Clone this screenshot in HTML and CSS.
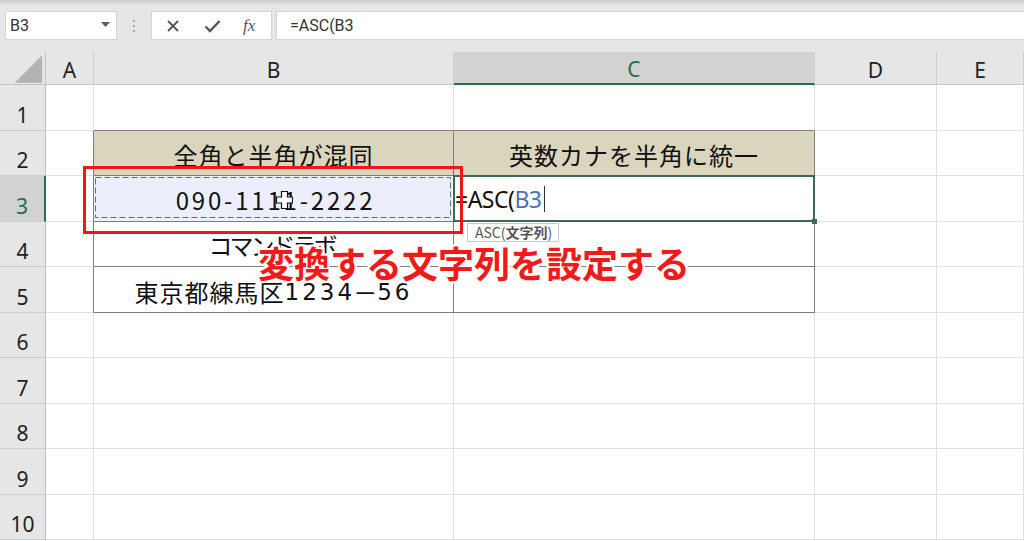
FILE: index.html
```html
<!DOCTYPE html>
<html lang="ja">
<head>
    <meta charset="UTF-8">
    <title>ASC</title>
    <link rel="stylesheet" href="styles.css">
</head>
<body>
<!-- 数式バー -->
<div class="top">
    <div class="namebox">
        <span>B3</span>
        <svg class="caret" width="9" height="5" viewBox="0 0 9 5"><polygon points="0,0 9,0 4.5,5" fill="#5a5a5a"/></svg>
    </div>
    <div class="grip"><i></i><i></i><i></i></div>
    <div class="fxbox">
        <svg width="14" height="14" viewBox="0 0 14 14"><path d="M2 2 L12 12 M12 2 L2 12" stroke="#555" stroke-width="1.8" fill="none"/></svg>
        <svg width="17" height="14" viewBox="0 0 17 14"><path d="M1.5 7.5 L6 12 L15.5 2" stroke="#555" stroke-width="2.4" fill="none"/></svg>
        <span class="fx">fx</span>
    </div>
    <div class="formula">=ASC(B3</div>
</div>

<!-- シート -->
<div class="sheet">
    <div class="hd corner"><svg width="46" height="33" viewBox="0 0 46 33"><polygon points="15,31 43,31 43,3" fill="#b3b3b3"/></svg></div>
    <div class="hd">A</div>
    <div class="hd">B</div>
    <div class="hd sel">C</div>
    <div class="hd">D</div>
    <div class="hd">E</div>

    <div class="rh">1</div><div class="c"></div><div class="c above"></div><div class="c above"></div><div class="c"></div><div class="c"></div>

    <div class="rh">2</div><div class="c beside"></div><div class="c t head">全角と半角が混同</div><div class="c t head">英数カナを半角に統一</div><div class="c"></div><div class="c"></div>

    <div class="rh sel">3</div><div class="c beside"></div>
    <div class="c t copy">
        <span class="tel">090-1111-2222</span>
        <svg class="ants" width="360" height="46"><rect x="2.5" y="2.5" width="355" height="40" fill="none" stroke="#4f7d66" stroke-width="1" stroke-dasharray="6 3"/></svg>
        <svg class="plus" width="17" height="18" viewBox="0 0 17 18"><path d="M5.5 0.5 H11.5 V6 H16.5 V12 H11.5 V17.5 H5.5 V12 H0.5 V6 H5.5 Z" fill="#fff" stroke="#111" stroke-width="1.2"/></svg>
    </div>
    <div class="c t edit"><span>=ASC(</span><span class="ref">B3</span><span class="caret-line"></span></div>
    <div class="c"></div><div class="c"></div>

    <div class="rh">4</div><div class="c beside"></div><div class="c t"><span class="kana">コマンドラボ</span></div><div class="c t"></div><div class="c"></div><div class="c"></div>

    <div class="rh">5</div><div class="c beside"></div><div class="c t low"><span class="addr">東京都練馬区</span><span class="num">1234</span><span class="dash">－</span><span class="num">56</span></div><div class="c t"></div><div class="c"></div><div class="c"></div>

    <div class="rh">6</div><div class="c"></div><div class="c"></div><div class="c"></div><div class="c"></div><div class="c"></div>
    <div class="rh">7</div><div class="c"></div><div class="c"></div><div class="c"></div><div class="c"></div><div class="c"></div>
    <div class="rh">8</div><div class="c"></div><div class="c"></div><div class="c"></div><div class="c"></div><div class="c"></div>
    <div class="rh">9</div><div class="c"></div><div class="c"></div><div class="c"></div><div class="c"></div><div class="c"></div>
    <div class="rh">10</div><div class="c"></div><div class="c"></div><div class="c"></div><div class="c"></div><div class="c"></div>
</div>

<!-- 注釈 -->
<div class="redbox"></div>
<div class="tip">ASC(<b>文字列</b>)</div>
<div class="caption">変換する文字列を設定する</div>
</body>
</html>
```

FILE: styles.css
```css
*{
    margin: 0;
    padding: 0;
    box-sizing: border-box;
}
body{
    width: 1024px;
    height: 541px;
    overflow: hidden;
    background: #fff;
    font-family: "Noto Sans CJK JP", sans-serif;
    color: #111;
    position: relative;
}

/*数式バー*/
.top{
    height: 52px;
    background: linear-gradient(#cbcbcb, #e6e6e6 5px);
    display: flex;
    align-items: flex-start;
    padding: 11px 0 0 5px;
}
.namebox{
    width: 112px;
    height: 29px;
    background: #fff;
    border: 1px solid #d4d4d4;
    display: flex;
    align-items: center;
    justify-content: space-between;
    padding: 0 6px 0 4px;
    font-family: Roboto, sans-serif;
    font-size: 16px;
    color: #333;
}
.namebox .caret{
    margin-bottom: 3px;
}
.grip{
    width: 34px;
    height: 29px;
    display: flex;
    flex-direction: column;
    align-items: center;
    justify-content: center;
    gap: 3px;
}
.grip i{
    width: 2px;
    height: 2px;
    background: #a8a8a8;
}
.fxbox{
    width: 121px;
    height: 29px;
    background: #fff;
    border: 1px solid #d4d4d4;
    display: flex;
    align-items: center;
    padding-left: 14px;
    gap: 24px;
}
.fxbox .fx{
    font-family: "Liberation Serif", serif;
    font-style: italic;
    font-size: 17px;
    color: #555;
    margin-left: -2px;
}
.formula{
    flex: 1;
    height: 29px;
    margin-left: 4px;
    background: #fff;
    border: 1px solid #d4d4d4;
    border-right: none;
    font-family: Roboto, sans-serif;
    font-size: 16px;
    color: #333;
    padding-left: 13px;
    line-height: 27px;
}

/*シート*/
.sheet{
    display: grid;
    grid-template-columns: 46px 48px 360px 361px 122px 1fr;
    grid-template-rows: 33px 46px 45px 46px 45px 46px 45px 46px 45px 46px 45px;
}
.hd{
    background: #e6e6e6;
    border-right: 1px solid #cfcfcf;
    border-bottom: 1px solid #c4c4c4;
    font-family: "Noto Sans", sans-serif;
    font-size: 21px;
    line-height: 21px;
    color: #222;
    display: flex;
    align-items: center;
    justify-content: center;
    padding-top: 4px;
}
.hd.corner{
    padding: 0;
    border-right-color: #c4c4c4;
}
.hd.sel{
    background: #d2d2d2;
    color: #217346;
    border-bottom: 2px solid #217346;
}
.rh{
    background: #e6e6e6;
    border-right: 1px solid #bfbfbf;
    border-bottom: 1px solid #cdcdcd;
    font-family: "Noto Sans", sans-serif;
    font-size: 21px;
    line-height: 21px;
    color: #222;
    display: flex;
    align-items: flex-end;
    justify-content: center;
    padding-bottom: 4px;
}
.rh.sel{
    background: #d2d2d2;
    color: #217346;
    border-right: 2px solid #217346;
}
.c{
    border-right: 1px solid #e0e0e0;
    border-bottom: 1px solid #e0e0e0;
    display: flex;
    align-items: center;
    justify-content: center;
    font-size: 24px;
    white-space: nowrap;
}
.c.above{
    border-bottom-color: #7d7d7d;
}
.c.beside{
    border-right-color: #7d7d7d;
}
/*表の罫線*/
.c.t{
    border-right-color: #7d7d7d;
    border-bottom-color: #7d7d7d;
}
.c.head{
    background: #dad5bd;
    letter-spacing: 1px;
    padding-top: 2px;
}
.c.low{
    padding-top: 4px;
}
.c.copy{
    background: #eceefb;
    position: relative;
}
.copy .tel{
    letter-spacing: 2.8px;
    margin: 2px 0 0 4px;
}
.copy .ants{
    position: absolute;
    left: -1px;
    top: -1px;
}
.copy .plus{
    position: absolute;
    left: 182px;
    top: 15px;
}
.c .kana{
    letter-spacing: -3px;
    margin-left: -4px;
}
.c .addr{
    letter-spacing: 1px;
}
.c .num{
    font-family: "DejaVu Sans", sans-serif;
    font-size: 23px;
    letter-spacing: 3px;
}
.c .dash{
    margin-left: -2px;
}
.c.edit{
    justify-content: flex-start;
    position: relative;
    padding-left: 1px;
    letter-spacing: -0.5px;
    font-family: "Noto Sans", sans-serif;
    font-size: 23px;
}
.c.edit::after{
    content: "";
    position: absolute;
    left: -1px;
    top: -1px;
    right: -1px;
    bottom: -1px;
    border: 2px solid #3d6a54;
}
.c.edit::before{
    content: "";
    position: absolute;
    right: -3px;
    bottom: -3px;
    width: 5px;
    height: 5px;
    background: #3d6a54;
    z-index: 1;
}
.edit .ref{
    color: #4a72b8;
}
.edit .caret-line{
    width: 1px;
    height: 26px;
    background: #333;
    margin-left: 2px;
}

/*注釈*/
.redbox{
    position: absolute;
    left: 83px;
    top: 166px;
    width: 380px;
    height: 68px;
    border: 3px solid #f01616;
}
.caption{
    position: absolute;
    left: 258px;
    top: 240px;
    font-family: "Noto Sans CJK JP", sans-serif;
    font-weight: 700;
    font-size: 36px;
    line-height: 44px;
    color: #f01a1a;
    white-space: nowrap;
    text-shadow: 2px 0 0 #fff, -2px 0 0 #fff, 0 2px 0 #fff, 0 -2px 0 #fff,
        2px 2px 0 #fff, -2px -2px 0 #fff, 2px -2px 0 #fff, -2px 2px 0 #fff;
}
.tip{
    position: absolute;
    left: 467px;
    top: 223px;
    height: 19px;
    padding: 0 6px 0 7px;
    background: #fff;
    border: 1px solid #c9c9c9;
    font-family: "Noto Sans CJK JP", sans-serif;
    font-size: 14px;
    line-height: 17px;
    color: #555;
}
.tip b{
    font-weight: 700;
}
```
